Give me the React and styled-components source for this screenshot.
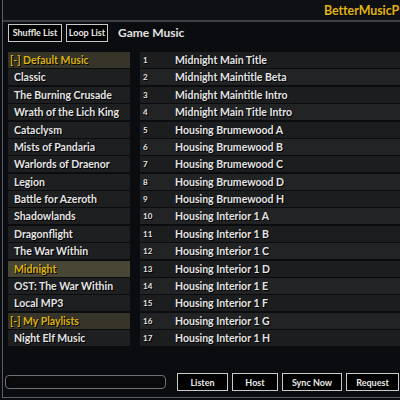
import styled, { createGlobalStyle } from "styled-components"

const GlobalStyle = createGlobalStyle`
    html, body {
        margin: 0;
        padding: 0;
        background: #0b0c0f;
        overflow: hidden;
    }
    body {
        font-family: Lato, "Open Sans", sans-serif;
    }
`
const Window = styled.div`
    margin-left: 2px;
    width: 397px;
    height: 397px;
    border-left: 1px solid #5a5f67;
    border-bottom: 1px solid #5a5f67;
    background: #0b0c0f;
    display: flex;
    flex-direction: column;
    overflow: hidden;
`
const TitleBar = styled.div`
    height: 20px;
    flex: none;
    border-bottom: 2px solid #3b3e45;
    background: #0f1014;
    display: flex;
    align-items: center;
    padding-left: 321px;
`
const Title = styled.span`
    color: #e0b412;
    font-size: 12.5px;
    font-weight: 700;
    letter-spacing: -0.1px;
    white-space: nowrap;
    text-shadow: 1px 1px 0 #000;
`
const Toolbar = styled.div`
    display: flex;
    flex: none;
    align-items: center;
    gap: 4px;
    padding: 1px 0 0 5px;
    height: 19px;
`
const Button = styled.button`
    box-sizing: border-box;
    width: ${p => p.w}px;
    height: 18px;
    padding: 0;
    background: #000;
    border: 1px solid #c9c9c9;
    color: #e8e8e8;
    font-family: inherit;
    font-size: 9px;
    font-weight: 700;
    text-shadow: 1px 1px 0 #000;
`
const Heading = styled.span`
    margin-left: 6px;
    color: #e2e2e2;
    font-size: 12px;
    font-weight: 700;
`
const Body = styled.div`
    display: flex;
    flex: 1;
    min-height: 0;
    gap: 10px;
    padding: 10px 0 0 5px;
`
const List = styled.div`
    display: grid;
    grid-auto-rows: 16px;
    row-gap: 1.375px;
    align-content: start;
    width: ${p => (p.w ? `${p.w}px` : "auto")};
    flex: ${p => (p.w ? "none" : 1)};
`
const NavRow = styled.div`
    display: flex;
    align-items: center;
    padding-left: ${p => (p.group ? 2 : 6)}px;
    background: ${p => (p.group ? "#37352a" : p.active ? "#4a4635" : "#1e1f21")};
    color: ${p => (p.group || p.active ? "#dcb20e" : "#e4e4e4")};
    font-size: 10.5px;
    font-weight: 700;
    white-space: nowrap;
    text-shadow: 1px 1px 0 #000;
`
const TrackRow = styled.div`
    display: flex;
    align-items: center;
    background: ${p => (p.odd ? "#1c1d1f" : "#222325")};
    color: #e4e4e4;
    font-size: 10.5px;
    font-weight: 700;
    white-space: nowrap;
    text-shadow: 1px 1px 0 #000;
`
const Num = styled.span`
    width: 35px;
    padding-left: 3px;
    box-sizing: border-box;
    font-size: 8px;
`
const Footer = styled.div`
    display: flex;
    flex: none;
    align-items: center;
    padding: 0 0 6px 2px;
`
const Search = styled.div`
    box-sizing: border-box;
    width: 161px;
    height: 14px;
    border: 1px solid #6f7175;
    border-radius: 4px;
    background: #0a0a0c;
    margin-right: 11px;
`
const Actions = styled.div`
    display: flex;
    gap: 4px;
`

const nav = [
    { name: "[-] Default Music", group: true },
    { name: "Classic" },
    { name: "The Burning Crusade" },
    { name: "Wrath of the Lich King" },
    { name: "Cataclysm" },
    { name: "Mists of Pandaria" },
    { name: "Warlords of Draenor" },
    { name: "Legion" },
    { name: "Battle for Azeroth" },
    { name: "Shadowlands" },
    { name: "Dragonflight" },
    { name: "The War Within" },
    { name: "Midnight", active: true },
    { name: "OST: The War Within" },
    { name: "Local MP3" },
    { name: "[-] My Playlists", group: true },
    { name: "Night Elf Music" },
]

const tracks = [
    "Midnight Main Title",
    "Midnight Maintitle Beta",
    "Midnight Maintitle Intro",
    "Midnight Main Title Intro",
    "Housing Brumewood A",
    "Housing Brumewood B",
    "Housing Brumewood C",
    "Housing Brumewood D",
    "Housing Brumewood H",
    "Housing Interior 1 A",
    "Housing Interior 1 B",
    "Housing Interior 1 C",
    "Housing Interior 1 D",
    "Housing Interior 1 E",
    "Housing Interior 1 F",
    "Housing Interior 1 G",
    "Housing Interior 1 H",
]

function App() {
    return (
        <>
            <GlobalStyle />
            <Window>
                <TitleBar>
                    <Title>BetterMusicP</Title>
                </TitleBar>
                <Toolbar>
                    <Button w={54}>Shuffle List</Button>
                    <Button w={42}>Loop List</Button>
                    <Heading>Game Music</Heading>
                </Toolbar>
                <Body>
                    <List w={122}>
                        {nav.map(n => (
                            <NavRow key={n.name} group={n.group} active={n.active}>{n.name}</NavRow>
                        ))}
                    </List>
                    <List>
                        {tracks.map((t, i) => (
                            <TrackRow key={t} odd={i % 2 === 0}>
                                <Num>{i + 1}</Num>
                                {t}
                            </TrackRow>
                        ))}
                    </List>
                </Body>
                <Footer>
                    <Search />
                    <Actions>
                        <Button w={51}>Listen</Button>
                        <Button w={46}>Host</Button>
                        <Button w={60}>Sync Now</Button>
                        <Button w={53}>Request</Button>
                    </Actions>
                </Footer>
            </Window>
        </>
    )
}

export default App
